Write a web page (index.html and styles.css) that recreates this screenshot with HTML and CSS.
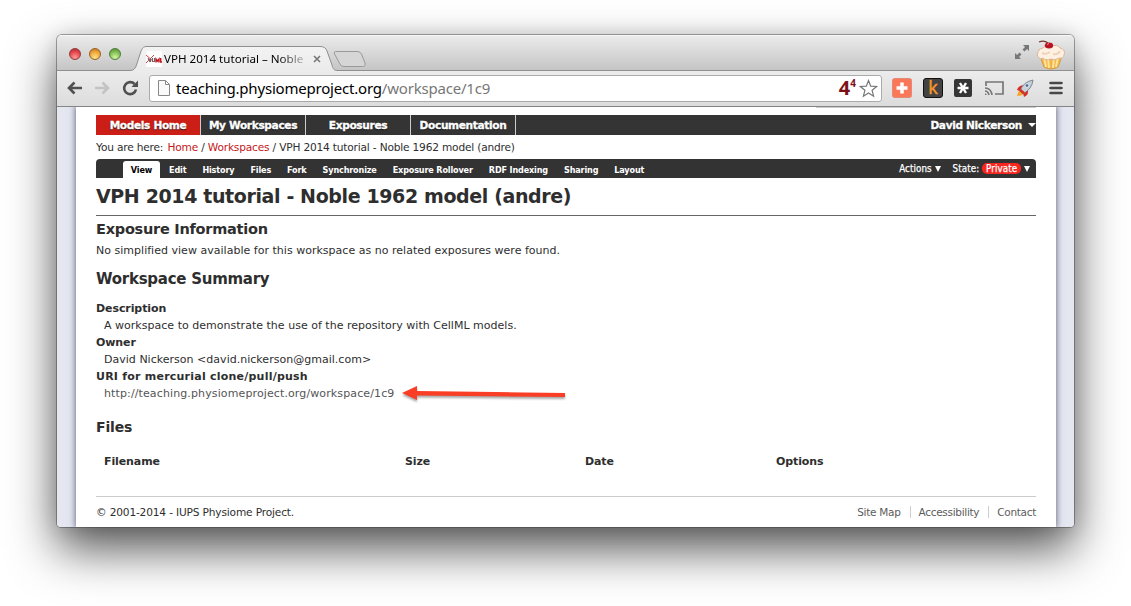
FILE: index.html
```html
<!DOCTYPE html>
<html lang="en">
<head>
<meta charset="utf-8">
<title>VPH 2014 tutorial - Noble 1962 model (andre)</title>
<link rel="stylesheet" href="styles.css">
</head>
<body>
<div class="window">
  <header class="tabstrip">
    <div class="lights"><i class="light red"></i><i class="light amber"></i><i class="light green"></i></div>
    <div class="tab">
      <svg class="tab-shape" width="238" height="25" viewBox="0 0 238 25">
        <defs><linearGradient id="tg" x1="0" y1="0" x2="0" y2="1"><stop offset="0" stop-color="#f3f3f3"/><stop offset="1" stop-color="#ebebeb"/></linearGradient></defs>
        <path d="M0 25V24.500C4 24.500 5.500 22 6.500 19L11 5C12.500 1.500 14 .5 17 .5H190C194 .5 196 2 197 5L202 19C203 23 204 24.500 208 24.500V25Z" fill="url(#tg)"/>
        <path d="M0 24.500C4 24.500 5.500 22 6.500 19L11 5C12.500 1.500 14 .5 17 .5H190C194 .5 196 2 197 5L202 19C203 23 204 24.500 208 24.500" fill="none" stroke="#8f8f8f"/>
        <path d="M205.500 5.500H227Q230.500 5.500 231.500 8L235 17Q236 20.500 232.500 20.500H214Q211 20.500 210 18L204.500 8Q203.500 5.500 205.500 5.500Z" fill="#d6d6d6" stroke="#999"/>
      </svg>
      <div class="tab-content">
        <svg width="16" height="16" viewBox="0 0 16 16"><path fill="#fff" d="M0 0h16v16H0z"/><path d="M0 4L8 11M0 12L8 4" stroke="#d9454d" fill="none"/><path d="M2 7l2 4M4.500 7.500v3.500m2-4v4m2-4v4" stroke="#666" stroke-width="1.100"/><path d="M10 11.500V8l1.500 2L13 8v3.500M14.700 7v4H16" stroke="#c5151f" stroke-width="1.400" fill="none"/></svg>
        <span class="tab-title">VPH 2014 tutorial – Noble</span>
        <svg class="close" width="8" height="8" viewBox="0 0 8 8"><path d="M1 1l6 6M7 1L1 7" stroke="#777" stroke-width="1.600"/></svg>
      </div>
    </div>
    <div class="strip-icons">
      <svg width="16" height="16" viewBox="0 0 16 16" fill="#777"><path d="M9 1h6v6l-2-2-2.500 2.500L8.500 5.500 11 3zM1 15V9l2 2 2.500-2.500 2 2L5 13l2 2z"/></svg>
      <svg width="30" height="30" viewBox="0 0 30 30">
        <path d="M4 16L8 27Q15 31 22 27L26 16Z" fill="#f0b450" stroke="#d99a3d"/>
        <path d="M8 17l2 10M12 18l1 10M18 18l-1 10M22 17l-2 10" stroke="#ffe493" stroke-width="2"/>
        <path d="M3 18Q0 15 2 12Q3 8 7 8Q9 5 14 6Q22 4 24 8Q30 10 28 15Q27 19 23 18Q19 21 15 19Q9 21 7 18Q5 20 3 18Z" fill="#fff1e2" stroke="#d9b69b"/>
        <path d="M6 13Q10 15 14 12M17 14Q22 15 24 11" stroke="#efd2bd" fill="none" stroke-width="2"/>
        <path d="M12 3Q8 0 3 2" stroke="#743a28" stroke-width="1.300" fill="none"/><ellipse cx="13" cy="5.500" rx="4.200" ry="3" fill="#ba1324"/><path d="M11 4.500l2-1" stroke="#f2949a"/>
      </svg>
    </div>
  </header>
  <div class="toolbar">
    <svg class="nav-icons" width="74" height="18" viewBox="0 0 74 18" fill="none" stroke="#505050" stroke-width="2.600">
      <path d="M1.500 9H15M7.500 3.500L2 9l5.500 5.500"/><path d="M28 9h13.500M35.500 3.500L41 9l-5.500 5.500" stroke="#c3c3c3"/><path d="M67.500 5A6 6 0 1 0 69 10.500"/><path d="M71 1.500v6.500h-6.500z" fill="#505050" stroke="none"/>
    </svg>
    <div class="omnibox">
      <svg width="12" height="16" viewBox="0 0 12 16"><path d="M.5.5h7l4 4v11H.5zM7.500.5v4h4" fill="#fafafa" stroke="#888"/></svg>
      <span class="url">teaching.physiomeproject.org<span class="path">/workspace/1c9</span></span>
      <span class="four">4<sup>4</sup></span>
      <svg width="19" height="19" viewBox="0 0 19 19"><path d="M9.500 1.500l2.200 5.600 6 .4-4.600 3.800 1.500 5.900-5.100-3.300-5.100 3.300 1.500-5.900L1.300 7.500l6-.4z" fill="#fff" stroke="#777" stroke-width="1.200"/></svg>
    </div>
    <div class="extensions">
      <svg width="20" height="20" viewBox="0 0 20 20"><rect x=".5" y=".5" width="19" height="19" rx="2" fill="#fb7759" stroke="#e38a76"/><path d="M10 4.500v11M4.500 10h11" stroke="#fff" stroke-width="3.500"/></svg>
      <span class="ext-k">k</span>
      <svg class="ext-star" width="18" height="18" viewBox="0 0 18 18"><rect width="18" height="18" rx="2" fill="#353535"/><path d="M3.500 9h11M6 4l6 10M12 4L6 14" stroke="#fff" stroke-width="2.400"/></svg>
      <svg class="ext-cast" width="20" height="16" viewBox="0 0 20 16" fill="none" stroke="#777" stroke-width="1.700"><path d="M2 6V2h17v12h-8M1 8q6 0 7 7M1 11q3 0 4 4"/><path d="M1 13l2 2H1z" fill="#777" stroke="none"/></svg>
      <svg class="ext-rocket" width="18" height="18" viewBox="0 0 18 18"><path d="M1 17Q2 12 5 10l4 4Q6 17 1 17z" fill="#f7a62a"/><path d="M1 11Q2 7 7 6l-3 6zM12 11l-5 3 1 4q5-2 4-7z" fill="#d82d20"/><path d="M4 12Q7 3 17 1Q16 10 7 15z" fill="#c8d0d9" stroke="#68717e" stroke-width=".8"/><path d="M3.500 12l3.500 3 2-1.500L5 10z" fill="#d82d20"/><circle cx="11" cy="6.500" r="1.800" fill="#486f9b" stroke="#fff" stroke-width=".6"/></svg>
      <svg class="ext-menu" width="14" height="14" viewBox="0 0 14 14"><path d="M1.500 2h11M1.500 7h11M1.500 12h11" stroke="#484848" stroke-width="2.600" stroke-linecap="round"/></svg>
    </div>
  </div>
  <div class="viewport">
    <main class="page">
      <div class="search-edge"></div>
      <nav class="globalnav">
        <a class="current"><span>Models Home</span></a><a><span>My Workspaces</span></a><a><span>Exposures</span></a><a><span>Documentation</span></a>
        <span class="user">David Nickerson<i class="caret"></i></span>
      </nav>
      <div class="crumbs">You are here: <a>Home</a> / <a>Workspaces</a> / VPH 2014 tutorial - Noble 1962 model (andre)</div>
      <nav class="views">
        <a class="selected">View</a><a>Edit</a><a>History</a><a>Files</a><a>Fork</a><a>Synchronize</a><a>Exposure Rollover</a><a>RDF Indexing</a><a>Sharing</a><a>Layout</a>
        <div class="actions"><span>Actions <i class="down"></i></span><span>State: <b>Private</b> <i class="down"></i></span></div>
      </nav>
      <h1>VPH 2014 tutorial - Noble 1962 model (andre)</h1>
      <h2 class="exposure">Exposure Information</h2>
      <p class="note">No simplified view available for this workspace as no related exposures were found.</p>
      <h2 class="summary">Workspace Summary</h2>
      <dl>
        <dt>Description</dt><dd>A workspace to demonstrate the use of the repository with CellML models.</dd>
        <dt>Owner</dt><dd>David Nickerson &lt;david.nickerson@gmail.com&gt;</dd>
        <dt class="uri-label">URI for mercurial clone/pull/push</dt>
        <dd class="uri"><a>http://teaching.physiomeproject.org/workspace/1c9</a>
          <svg width="170" height="20" viewBox="0 0 170 20"><g class="arrow" fill="#f93e25"><path d="M0 8L15 1V6L163 8V12L15 10.500V15Z"/></g></svg>
        </dd>
      </dl>
      <h2 class="files">Files</h2>
      <div class="table-head"><span>Filename</span><span>Size</span><span>Date</span><span>Options</span></div>
      <footer><span class="copy">© 2001-2014 - IUPS Physiome Project.</span><span class="links"><a>Site Map</a><a>Accessibility</a><a>Contact</a></span></footer>
    </main>
  </div>
</div>
</body>
</html>
```
FILE: styles.css
```css
* { box-sizing: border-box; }
body { margin: 0; width: 1131px; height: 606px; overflow: hidden; padding: 35px 57px 0; background: #fff; font-family: "DejaVu Sans", sans-serif; font-size: 11px; color: #2e2e2e; }
svg { display: block; flex: none; }
.window { width: 1017px; height: 492px; border-radius: 5px 5px 4px 4px; overflow: hidden; background: #e4e7f0; box-shadow: 0 0 0 1px rgba(60,60,60,.45), 0 22px 48px 0 rgba(0,0,0,.68), 0 0 20px rgba(0,0,0,.12); }
.tabstrip { display: flex; align-items: flex-start; height: 36px; background: linear-gradient(#ececec, #c5c5c5); border-bottom: 1px solid #8f8f8f; box-shadow: inset 0 1px #f8f8f8; }
.lights { display: flex; gap: 8px; padding: 13px 0 0 12px; width: 73px; }
.light { width: 12px; height: 12px; border-radius: 50%; border: 1px solid #777; flex: none; }
.red { background: radial-gradient(circle at 50% 85%, #ff9b98, #e2444a 60%, #a5282d); border-color: #983b3b; }
.amber { background: radial-gradient(circle at 50% 85%, #ffe488, #eda338 60%, #b66b1d); border-color: #976323; }
.green { background: radial-gradient(circle at 50% 85%, #d6f7a4, #7dbb50 60%, #4a862f); border-color: #527e3c; }
.tab { display: grid; margin-top: 11px; height: 25px; }
.tab > * { grid-area: 1 / 1; }
.tab-content { display: flex; align-items: center; height: 25px; padding-left: 16px; width: 195px; }
.tab-title { font: 11.6px "Noto Sans", sans-serif; color: transparent; background: linear-gradient(90deg, #000 82%, #bbb); background-clip: text; -webkit-background-clip: text; margin-left: 2px; white-space: nowrap; width: 140px; }
.close { margin-left: 9px; }
.strip-icons { margin-left: auto; display: flex; gap: 6px; padding: 5px 8px 0 0; }
.strip-icons svg:first-child { margin-top: 4px; }
.toolbar { display: flex; align-items: center; height: 36px; background: linear-gradient(#ececec, #dcdcdc); border-bottom: 1px solid #858585; padding: 0 0 1px 10px; }
.omnibox { margin-left: 8px; width: 733px; height: 27px; background: #fff; border: 1px solid #aaa; border-radius: 3px; display: flex; align-items: center; padding: 0 3px 0 8px; }
.url { font: 15px "Noto Sans", sans-serif; color: #000; margin-left: 6px; white-space: nowrap; letter-spacing: -.2px; }
.path { color: #777; }
.four { margin-left: auto; font: bold 20px "Noto Sans", sans-serif; color: #7d1017; display: flex; align-items: flex-start; line-height: 22px; margin-right: 3px; }
.four sup { font-size: 10px; line-height: 10px; margin-top: 1px; }
.extensions { display: flex; align-items: center; margin-left: 10px; }
.ext-k { width: 20px; height: 20px; margin-left: 11px; border-radius: 3px; border: 1px solid #111; background: #434343; color: #f79529; font: 18px/17px "Noto Sans", sans-serif; -webkit-text-stroke: .4px #f79529; text-align: center; }
.ext-star { margin-left: 11px; }
.ext-cast { margin-left: 12px; }
.ext-rocket { margin-left: 12px; }
.ext-menu { margin-left: 15px; }
.viewport { height: 420px; padding: 0 18px 0 19px; background: #e4e7f0; overflow: hidden; }
.page { height: 420px; background: #fff; padding: 0 20px; display: flow-root; box-shadow: 0 0 6px 1px #74748c; }
.search-edge { height: 1px; width: 220px; margin-left: auto; background: #ccc; }
.globalnav { margin-top: 7px; height: 20px; background: #343434; color: #fff; font-weight: bold; font-size: 10.6px; letter-spacing: -.35px; display: flex; line-height: 21px; text-shadow: 0 1px 1px #111; -webkit-text-stroke: .3px #fff; }
.globalnav a { width: 105px; text-align: center; border-right: 1px solid #ccc; white-space: nowrap; }
.globalnav .current { background: #cb1e17; }
.user { margin-left: auto; display: flex; align-items: center; gap: 6px; }
.caret { border: 4px solid transparent; border-top-color: #fff; border-bottom: 0; }
.crumbs { height: 24px; line-height: 25px; white-space: nowrap; font-size: 10.6px; letter-spacing: -.18px; }
.crumbs a { color: #c41821; }
.crumbs a:first-child { margin-left: 1px; }
.views { height: 19px; background: #333; border-radius: 4px 4px 0 0; display: flex; padding: 2px 0 0 27px; color: #fff; font: bold 9px/18px "DejaVu Sans Condensed", "DejaVu Sans", sans-serif; letter-spacing: -.15px; white-space: nowrap; }
.views a { margin-right: 16px; }
.views .selected { background: #fff; color: #000; width: 37px; text-align: center; border-radius: 3px 3px 0 0; margin-right: 9px; }
.actions { margin-left: auto; display: flex; gap: 12px; padding-right: 6px; font-weight: normal; font-size: 9.7px; line-height: 16px; letter-spacing: .1px; -webkit-text-stroke: .25px #fff; }
.actions b { font-weight: normal; background: #f9251f; border-radius: 5px; padding: 0 4px; }
.down { display: inline-block; border: 3px solid transparent; border-top: 6px solid #fff; border-bottom: 0; }
h1, h2, p, dl, dd { margin: 0; }
h1 { height: 38px; border-bottom: 1px solid #666; font-size: 19px; line-height: 37px; white-space: nowrap; letter-spacing: -.38px; }
h2 { font-size: 15px; white-space: nowrap; }
.exposure { height: 27px; line-height: 27px; font-size: 14.5px; letter-spacing: -.25px; }
.note { line-height: 15px; white-space: nowrap; letter-spacing: .02px; }
.summary { line-height: 30px; margin-top: 6px; letter-spacing: -.26px; }
dl { line-height: 17px; margin-top: 6px; white-space: nowrap; letter-spacing: .02px; }
dt { font-weight: bold; letter-spacing: -.08px; }
dd { padding-left: 8px; }
.uri-label { letter-spacing: .23px; }
.uri { display: flex; color: #555; height: 17px; letter-spacing: .12px; }
.uri a { width: 298px; }
.arrow { filter: drop-shadow(0 2px 1px rgba(0,0,0,.35)); }
.files { line-height: 20px; margin-top: 15px; font-size: 14px; letter-spacing: -.15px; }
.table-head { display: grid; grid-template-columns: 301px 180px 191px 1fr; padding-left: 8px; font-weight: bold; line-height: 16px; margin-top: 17px; letter-spacing: -.1px; }
footer { margin-top: 26px; border-top: 1px solid #ccc; display: flex; justify-content: space-between; line-height: 31px; white-space: nowrap; }
.copy { font-size: 10.6px; letter-spacing: -.16px; }
.links { display: flex; align-items: center; line-height: 12px; color: #5c5c5c; font-size: 10.5px; letter-spacing: -.3px; padding-bottom: 1px; }
.links a + a { border-left: 1px solid #ccc; margin-left: 9px; padding-left: 8px; }
```
